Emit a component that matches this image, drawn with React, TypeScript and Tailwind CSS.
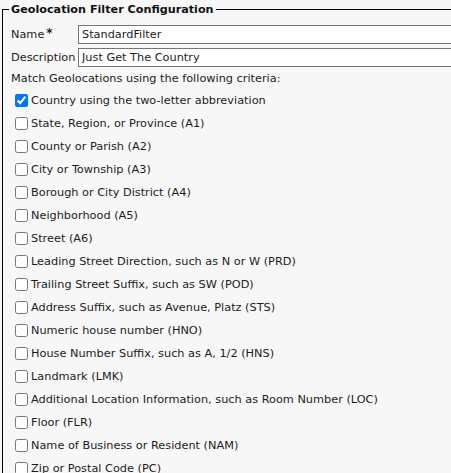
import { useState } from "react";

const criteria = [
  "Country using the two-letter abbreviation",
  "State, Region, or Province (A1)",
  "County or Parish (A2)",
  "City or Township (A3)",
  "Borough or City District (A4)",
  "Neighborhood (A5)",
  "Street (A6)",
  "Leading Street Direction, such as N or W (PRD)",
  "Trailing Street Suffix, such as SW (POD)",
  "Address Suffix, such as Avenue, Platz (STS)",
  "Numeric house number (HNO)",
  "House Number Suffix, such as A, 1/2 (HNS)",
  "Landmark (LMK)",
  "Additional Location Information, such as Room Number (LOC)",
  "Floor (FLR)",
  "Name of Business or Resident (NAM)",
  "Zip or Postal Code (PC)",
];

export default function App() {
  const [checked, setChecked] = useState<boolean[]>(criteria.map((_, i) => i === 0));
  const [name, setName] = useState("StandardFilter");
  const [desc, setDesc] = useState("Just Get The Country");

  return (
    <div className="h-screen overflow-hidden bg-[#f7f7f7] pt-[2px] pl-[2px] text-[11.3px] text-[#1c1c1c] font-['DejaVu_Sans',Verdana,sans-serif]">
      <fieldset className="w-[640px] border border-black pl-[8px] pb-4">
        <legend className="-ml-[2px] px-[2px] text-[11.2px] font-bold leading-[15px] text-[#111]">
          Geolocation Filter Configuration
        </legend>

        {/* Name / Description */}
        <div className="mt-[8px] flex items-center">
          <label className="w-[67px] leading-[15px]">
            Name<sup className="relative -top-[1px] ml-[2px] text-[12px] font-bold">*</sup>
          </label>
          <input
            value={name}
            onChange={(e) => setName(e.target.value)}
            className="h-[19px] flex-1 border border-[#767676] bg-white px-[3px] text-[11.3px] outline-none"
          />
        </div>
        <div className="mt-[4px] flex items-center">
          <label className="w-[67px] leading-[15px]">Description</label>
          <input
            value={desc}
            onChange={(e) => setDesc(e.target.value)}
            className="h-[19px] flex-1 border border-[#767676] bg-white px-[3px] text-[11.3px] outline-none"
          />
        </div>

        <div className="mt-[4px] leading-[15px]">Match Geolocations using the following criteria:</div>

        {/* Criteria checkboxes */}
        <div className="mt-[3px]">
          {criteria.map((c, i) => (
            <label key={c} className="flex h-[23px] items-center">
              <input
                type="checkbox"
                checked={checked[i]}
                onChange={() => setChecked((p) => p.map((v, j) => (j === i ? !v : v)))}
                className="m-0 ml-[4px] mr-[3px] h-[13px] w-[13px]"
              />
              <span className="leading-[15px]">{c}</span>
            </label>
          ))}
        </div>
      </fieldset>
    </div>
  );
}
